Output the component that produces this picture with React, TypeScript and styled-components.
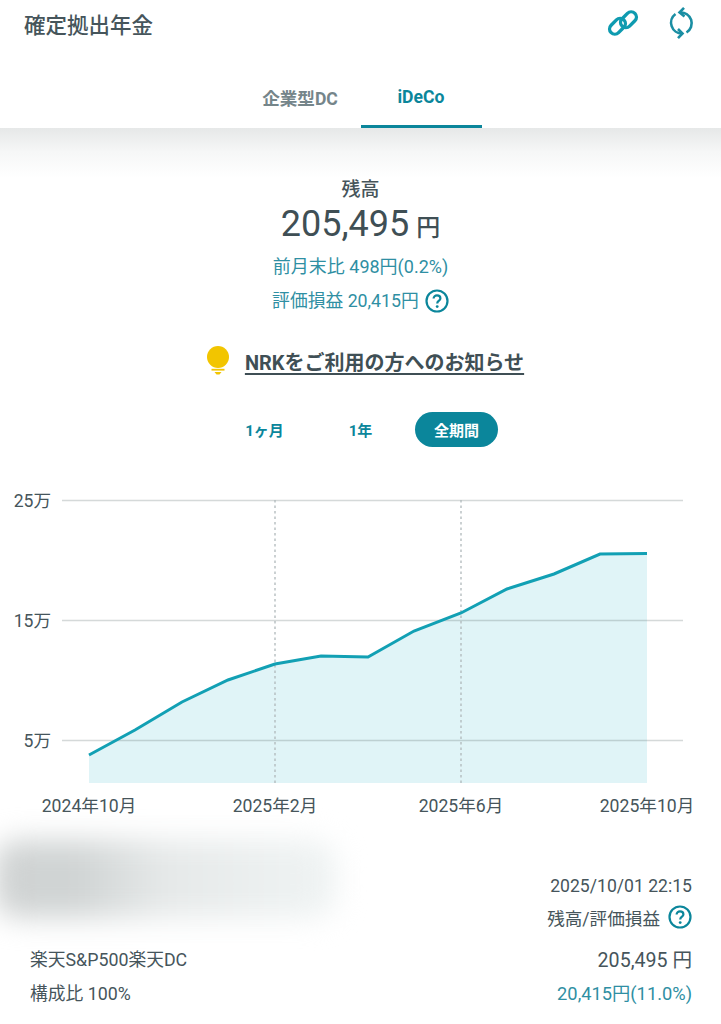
import React from 'react'
import styled, { createGlobalStyle } from 'styled-components'

const TEAL = '#0b869b'
const TEAL_TEXT = '#2f8fa3'
const INK = '#46555b'

const GlobalStyle = createGlobalStyle`
  html, body {
    margin: 0;
    padding: 0;
    background: #fff;
  }
  body {
    font-family: Roboto, "Noto Sans CJK JP", sans-serif;
    color: ${INK};
  }
`

const Page = styled.div`
  width: 721px;
  height: 1024px;
  overflow: hidden;
  position: relative;
  background: #fff;
`

const Header = styled.header`
  display: flex;
  align-items: center;
  justify-content: space-between;
  height: 46px;
  padding: 0 26px 0 24px;
  box-sizing: border-box;
`

const Title = styled.h1`
  margin: 0;
  font-size: 21.5px;
  font-weight: 500;
  color: ${INK};
`

const HeaderIcons = styled.div`
  display: flex;
  align-items: center;
  gap: 28px;
`

const Tabs = styled.nav`
  display: flex;
  justify-content: center;
  height: 82px;
`

const Tab = styled.div<{ $active?: boolean }>`
  width: 121px;
  display: flex;
  align-items: center;
  justify-content: center;
  padding-top: 23px;
  box-sizing: border-box;
  font-size: 17.6px;
  font-weight: 700;
  color: ${({ $active }) => ($active ? TEAL : '#75858a')};
  border-bottom: 3px solid ${({ $active }) => ($active ? TEAL : 'transparent')};
`

const Summary = styled.section`
  display: flex;
  flex-direction: column;
  align-items: center;
  padding-top: 48px;
  height: 216px;
  box-sizing: border-box;
  background: linear-gradient(#e6e8e8 0, #f6f7f7 24px, #fff 50px);
`

const BalanceLabel = styled.div`
  font-size: 19px;
  font-weight: 500;
  line-height: 27px;
`

const BalanceValue = styled.div`
  display: flex;
  align-items: baseline;
  gap: 7px;
  font-size: 36px;
  line-height: 42px;
  color: #3f4f55;
`

const Yen = styled.span`
  font-size: 24px;
  font-weight: 500;
`

const DeltaLine = styled.div`
  display: flex;
  align-items: center;
  gap: 6px;
  margin-top: 6px;
  height: 24px;
  font-size: 18px;
  line-height: 24px;
  color: ${TEAL_TEXT};
  & + & {
    margin-top: 10px;
    font-size: 17.8px;
  }
`

const Notice = styled.div`
  display: flex;
  align-items: center;
  justify-content: center;
  gap: 16px;
  height: 34px;
  padding-left: 10px;
`

const NoticeText = styled.span`
  font-size: 20px;
  font-weight: 700;
  text-decoration: underline;
  text-underline-offset: 3px;
  color: #3f4f55;
`

const Ranges = styled.div`
  display: flex;
  justify-content: center;
  gap: 13px;
  margin-top: 34px;
`

const RangeButton = styled.div<{ $active?: boolean }>`
  width: 83px;
  height: 35px;
  display: flex;
  align-items: center;
  justify-content: center;
  border-radius: 18px;
  font-size: 15px;
  font-weight: 700;
  color: ${({ $active }) => ($active ? '#fff' : TEAL)};
  background: ${({ $active }) => ($active ? TEAL : 'transparent')};
`

const ChartFrame = styled.div`
  margin-top: 43px;
  height: 330px;
`

const ChartSvg = styled.svg`
  display: block;
  text {
    font-family: Roboto, "Noto Sans CJK JP", sans-serif;
    font-size: 17.6px;
    fill: ${INK};
  }
`

const Detail = styled.section`
  position: relative;
  display: flex;
  flex-direction: column;
  padding: 54px 29px 0 30px;
`

const Smudge = styled.div`
  position: absolute;
  left: -6px;
  top: 20px;
  width: 342px;
  height: 78px;
  border-radius: 24px;
  background: linear-gradient(90deg, #d0d3d3 0, #d0d4d4 24%, #e6e9e9 50%, #eef2f2 90%);
  filter: blur(14px);
`

const MetaLine = styled.div`
  align-self: flex-end;
  display: flex;
  align-items: center;
  gap: 8px;
  height: 24px;
  font-size: 17.6px;
  margin-bottom: 7px;
`

const FundRows = styled.div`
  position: relative;
  margin-top: 5px;
`

const FundRow = styled.div`
  display: flex;
  align-items: center;
  justify-content: space-between;
  height: 34px;
  font-size: 17.8px;
`

const FundTotal = styled.span`
  font-size: 19.6px;
`

const FundGain = styled.span`
  color: ${TEAL_TEXT};
  font-size: 18.3px;
`

const points: [number, number][] = [
  [89, 755], [135, 730], [182, 702], [228, 680], [275, 664], [321, 656], [368, 657],
  [414, 631], [461, 613], [507, 589], [554, 574], [600, 554], [647, 553.5],
]

const TOP = 490
const BOTTOM = 783

const lineD = points.map(([x, y]) => `${x},${y - TOP}`).join(' ')
const areaD = `89,${BOTTOM - TOP} ${lineD} 647,${BOTTOM - TOP}`

const LinkIcon = () => (
  <svg width="32" height="32" viewBox="0 0 32 32" fill="none" stroke="#0f9bb0" strokeWidth="3.4">
    <rect x="1.5" y="14" width="18" height="10.5" rx="5.25" transform="rotate(-45 10.5 19.25)" />
    <rect x="12.5" y="7.5" width="18" height="10.5" rx="5.25" transform="rotate(-45 21.5 12.75)" />
  </svg>
)

const RefreshIcon = () => (
  <svg width="28" height="34" viewBox="0 0 28 34" fill="none" stroke="#1a8ea3" strokeWidth="2.6">
    <path d="M13 6.5A10.8 10.8 0 0 1 19.5 26.5" />
    <path d="M8.5 8A10.8 10.8 0 0 0 15 27.5" />
    <path d="M17 1.8L12.5 6.5L17.5 10.6" />
    <path d="M11 23L15.5 27.5L11 32.2" />
  </svg>
)

const HelpIcon: React.FC<{ size?: number }> = ({ size = 24 }) => (
  <svg width={size} height={size} viewBox="0 0 24 24" fill="none">
    <circle cx="12" cy="12" r="10.5" stroke={TEAL} strokeWidth="2.2" />
    <path d="M8.6 9.6C8.6 7.6 10.1 6.4 12 6.4C13.9 6.4 15.4 7.6 15.4 9.4C15.4 11.6 12.2 11.9 12.2 14.6" stroke={TEAL} strokeWidth="2.2" />
    <circle cx="12.2" cy="17.6" r="1.4" fill={TEAL} />
  </svg>
)

const BulbIcon = () => (
  <svg width="22" height="30" viewBox="0 0 22 30" fill="#f2c500">
    <circle cx="11" cy="11" r="11" />
    <rect x="4.5" y="22.8" width="13" height="1.8" />
    <path d="M7.5 26h7l-2 2.6h-3z" />
  </svg>
)

export default function App() {
  return (
    <Page>
      <GlobalStyle />
      <Header>
        <Title>確定拠出年金</Title>
        <HeaderIcons>
          <LinkIcon />
          <RefreshIcon />
        </HeaderIcons>
      </Header>
      <Tabs>
        <Tab>企業型DC</Tab>
        <Tab $active>iDeCo</Tab>
      </Tabs>
      <Summary>
        <BalanceLabel>残高</BalanceLabel>
        <BalanceValue>
          205,495<Yen>円</Yen>
        </BalanceValue>
        <DeltaLine>前月末比 498円(0.2%)</DeltaLine>
        <DeltaLine>
          評価損益 20,415円 <HelpIcon />
        </DeltaLine>
      </Summary>
      <Notice>
        <BulbIcon />
        <NoticeText>NRKをご利用の方へのお知らせ</NoticeText>
      </Notice>
      <Ranges>
        <RangeButton>1ヶ月</RangeButton>
        <RangeButton>1年</RangeButton>
        <RangeButton $active>全期間</RangeButton>
      </Ranges>
      <ChartFrame>
        <ChartSvg width="721" height="330" viewBox="0 0 721 330">
          <polygon points={areaD} fill="#e0f4f7" />
          {[500.5, 620.5, 740.5].map(y => (
            <line key={y} x1="62" x2="683" y1={y - TOP} y2={y - TOP} stroke="#405050" strokeOpacity="0.22" strokeWidth="1.4" />
          ))}
          {[275, 461].map(x => (
            <line key={x} x1={x} x2={x} y1="10" y2={BOTTOM - TOP} stroke="#b0b8ba" strokeWidth="1.3" strokeDasharray="2.5 3" />
          ))}
          <polyline points={lineD} fill="none" stroke="#12a0b4" strokeWidth="3" />
          <text x="51" y="17" textAnchor="end">25万</text>
          <text x="51" y="137" textAnchor="end">15万</text>
          <text x="51" y="257" textAnchor="end">5万</text>
          <text x="89" y="322" textAnchor="middle">2024年10月</text>
          <text x="275" y="322" textAnchor="middle">2025年2月</text>
          <text x="461" y="322" textAnchor="middle">2025年6月</text>
          <text x="647" y="322" textAnchor="middle">2025年10月</text>
        </ChartSvg>
      </ChartFrame>
      <Detail>
        <Smudge />
        <MetaLine>2025/10/01 22:15</MetaLine>
        <MetaLine>
          残高/評価損益 <HelpIcon />
        </MetaLine>
        <FundRows>
          <FundRow>
            <span>楽天S&amp;P500楽天DC</span>
            <FundTotal>205,495 円</FundTotal>
          </FundRow>
          <FundRow>
            <span>構成比 100%</span>
            <FundGain>20,415円(11.0%)</FundGain>
          </FundRow>
        </FundRows>
      </Detail>
    </Page>
  )
}
